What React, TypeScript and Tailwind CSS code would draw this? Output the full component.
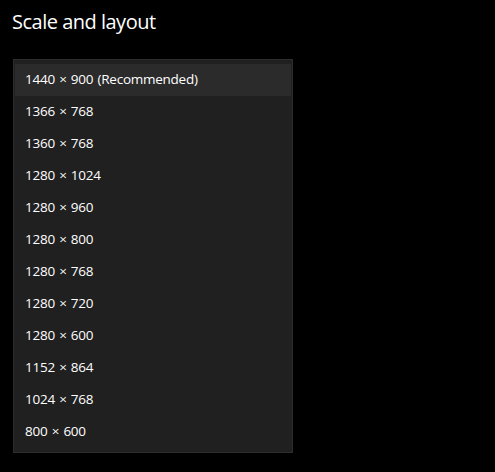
const resolutions = [
  "1440 × 900 (Recommended)",
  "1366 × 768",
  "1360 × 768",
  "1280 × 1024",
  "1280 × 960",
  "1280 × 800",
  "1280 × 768",
  "1280 × 720",
  "1280 × 600",
  "1152 × 864",
  "1024 × 768",
  "800 × 600",
];

export default function App() {
  return (
    <div
      className="w-[495px] h-[472px] bg-black text-white overflow-hidden"
      style={{ fontFamily: '"Open Sans", "Noto Sans", sans-serif' }}
    >
      <h1 className="pl-3 pt-[8px] text-[20px] leading-[28px] font-normal tracking-[-0.5px]">
        Scale and layout
      </h1>

      <div className="ml-[13px] mt-[23px] w-[280px] border border-[#2c2c2c] bg-[#202020] py-1">
        {resolutions.map((r, i) => (
          <div
            key={r}
            className={
              "h-8 mx-px flex items-center pl-[10px] pb-[2px] text-[13.5px] tracking-[-0.25px] [word-spacing:1px] " +
              (i === 0 ? "bg-[#2b2b2b]" : "")
            }
          >
            {r}
          </div>
        ))}
      </div>
    </div>
  );
}
